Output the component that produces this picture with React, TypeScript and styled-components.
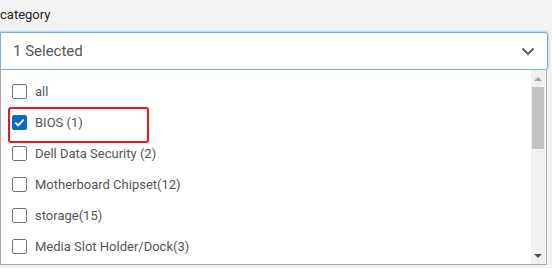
import styled, { createGlobalStyle, css } from "styled-components";

const GlobalStyle = createGlobalStyle`
  html, body {
    margin: 0;
    padding: 0;
    background: #f3f3f3;
  }
  * {
    box-sizing: border-box;
  }
`;

const Page = styled.div`
  width: 552px;
  height: 268px;
  overflow: hidden;
  background: #f3f3f3;
  font-family: Roboto, "Liberation Sans", sans-serif;
`;

const Label = styled.div`
  height: 32px;
  padding: 7px 0 0 0;
  font-size: 13px;
  line-height: 16px;
  color: #222;
`;

const SelectBox = styled.div`
  width: 548px;
  height: 38px;
  display: flex;
  align-items: center;
  justify-content: space-between;
  padding: 0 12px 0 12px;
  background: #fff;
  border: 1px solid #70b1e6;
  border-radius: 0 3px 3px 0;
  box-shadow: 0 0 2px 1px #b7d7f3;
  font-size: 15px;
  color: #555;
`;

const Chevron = () => (
  <svg width="14" height="9" viewBox="0 0 14 9">
    <path d="M1.5 1.5 L7 7 L12.5 1.5" fill="none" stroke="#555" strokeWidth="1.8" />
  </svg>
);

const List = styled.div`
  width: 547px;
  height: 195px;
  display: flex;
  background: #fff;
  border: 1px solid #a8a8a8;
  border-top: none;
`;

const Options = styled.div`
  flex: 1;
  padding-top: 6px;
`;

const Row = styled.div<{ $marked?: boolean }>`
  position: relative;
  height: 31px;
  display: flex;
  align-items: center;
  gap: 8px;
  padding-left: 11px;
  font-size: 13px;
  color: #555;

  ${(p) =>
    p.$marked &&
    css`
      &::after {
        content: "";
        position: absolute;
        left: 7px;
        top: 0;
        width: 137px;
        height: 32px;
        border: 2px solid #f0141c;
        border-radius: 3px;
      }
    `}
`;

const Box = styled.span<{ $checked?: boolean }>`
  width: 15px;
  height: 15px;
  flex: none;
  display: flex;
  align-items: center;
  justify-content: center;
  border-radius: 2px;
  border: 1px solid ${(p) => (p.$checked ? "#0b69c7" : "#767676")};
  background: ${(p) => (p.$checked ? "#0b69c7" : "#fff")};
`;

const Tick = () => (
  <svg width="11" height="9" viewBox="0 0 11 9">
    <path d="M1.3 4.6 L4.1 7.3 L9.7 1.6" fill="none" stroke="#fff" strokeWidth="1.9" />
  </svg>
);

const Scrollbar = styled.div`
  width: 14px;
  flex: none;
  display: flex;
  flex-direction: column;
  align-items: center;
  background: #f1f1f1;
  margin-right: 1px;
`;

const Arrow = styled.div<{ $down?: boolean }>`
  height: 17px;
  width: 100%;
  display: flex;
  align-items: center;
  justify-content: center;
  margin-top: ${(p) => (p.$down ? "auto" : "0")};

  &::before {
    content: "";
    border-left: 4px solid transparent;
    border-right: 4px solid transparent;
    ${(p) =>
      p.$down
        ? "border-top: 4px solid #505050;"
        : "border-bottom: 4px solid #a3a3a3;"}
  }
`;

const Thumb = styled.div`
  width: 12px;
  height: 62px;
  background: #c1c1c1;
`;

const options = [
  { label: "all" },
  { label: "BIOS (1)", checked: true },
  { label: "Dell Data Security (2)" },
  { label: "Motherboard Chipset(12)" },
  { label: "storage(15)" },
  { label: "Media Slot Holder/Dock(3)" },
];

export default function App() {
  return (
    <Page>
      <GlobalStyle />
      <Label>category</Label>
      <SelectBox>
        <span>1 Selected</span>
        <Chevron />
      </SelectBox>
      <List>
        <Options>
          {options.map((o) => (
            <Row key={o.label} $marked={o.checked}>
              <Box $checked={o.checked}>{o.checked && <Tick />}</Box>
              <span>{o.label}</span>
            </Row>
          ))}
        </Options>
        <Scrollbar>
          <Arrow />
          <Thumb />
          <Arrow $down />
        </Scrollbar>
      </List>
    </Page>
  );
}
